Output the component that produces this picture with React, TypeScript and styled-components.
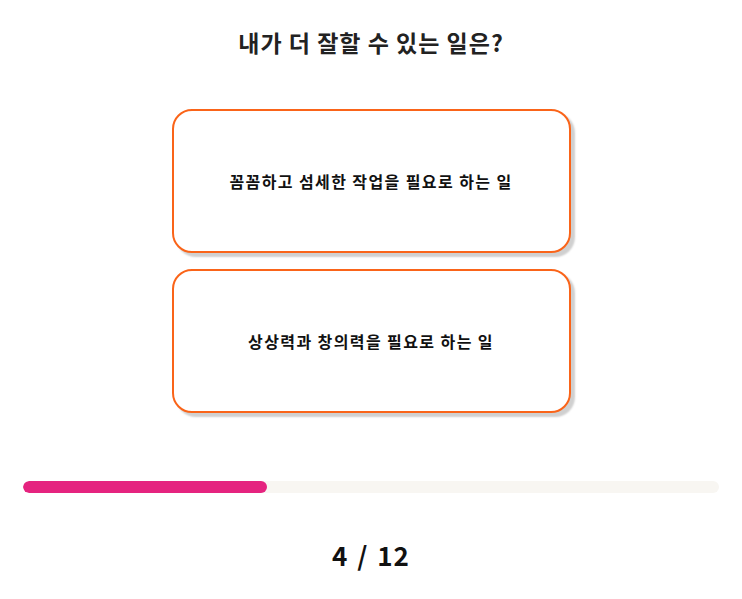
import React from "react";
import styled, { createGlobalStyle } from "styled-components";

const Global = createGlobalStyle`
  html, body { margin: 0; padding: 0; background: #fff; }
  body { font-family: "Noto Sans CJK KR", "Noto Sans", sans-serif; }
`;

const Page = styled.div`
  width: 742px;
  display: flex;
  flex-direction: column;
  align-items: center;
`;

const Title = styled.h1`
  margin: 26px 0 0;
  font-size: 23px;
  font-weight: 700;
  letter-spacing: 1px;
  color: #222;
  line-height: 32px;
`;

const Options = styled.div`
  margin-top: 51px;
  display: flex;
  flex-direction: column;
  gap: 16px;
`;

const Option = styled.button`
  box-sizing: border-box;
  width: 399px;
  height: 144px;
  border: 2px solid #fa6419;
  border-radius: 20px;
  background: #fff;
  box-shadow: 4px 4px 2px #d0d0d0;
  font-family: inherit;
  font-size: 16px;
  font-weight: 700;
  letter-spacing: 1.4px;
  color: #111;
  cursor: pointer;
`;

const Track = styled.div`
  margin-top: 68px;
  width: 696px;
  height: 12px;
  border-radius: 6px;
  background: #f8f6f2;
  overflow: hidden;
`;

const Fill = styled.div`
  height: 100%;
  border-radius: 6px;
  background: #e5237f;
`;

const Counter = styled.div`
  margin-top: 43px;
  font-size: 26px;
  font-weight: 700;
  letter-spacing: 1px;
  word-spacing: 2px;
  color: #111;
`;

const options = ["꼼꼼하고 섬세한 작업을 필요로 하는 일", "상상력과 창의력을 필요로 하는 일"];

export default function App() {
  const current = 4;
  const total = 12;
  return (
    <Page>
      <Global />
      <Title>내가 더 잘할 수 있는 일은?</Title>
      <Options>
        {options.map((o) => (
          <Option key={o}>{o}</Option>
        ))}
      </Options>
      <Track>
        <Fill style={{ width: `${(244 / 696) * 100}%` }} />
      </Track>
      <Counter>
        {current} / {total}
      </Counter>
    </Page>
  );
}
